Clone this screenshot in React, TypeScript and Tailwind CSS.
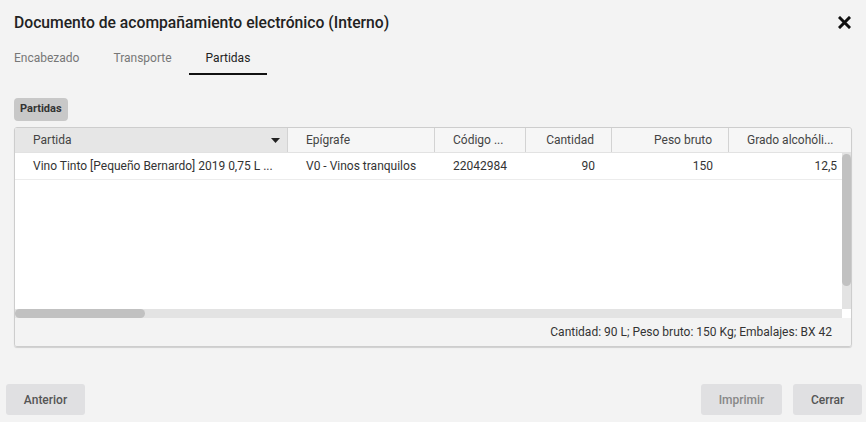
import React from 'react';

const cols = 'grid grid-cols-[273px_147px_91px_86px_117px_1fr]';

const App: React.FC = () => {
  return (
    <div className="w-[866px] h-[422px] bg-[#f3f3f3] flex flex-col font-['Roboto',sans-serif] text-[#333]">
      {/* Header */}
      <div className="h-[44px] flex items-center justify-between pl-[14px] pr-[15px] pt-[1px]">
        <h1 className="text-[15.7px] font-medium text-[#222]">Documento de acompañamiento electrónico (Interno)</h1>
        <svg width="13" height="13" viewBox="0 0 13 13">
          <path d="M2 2 L11 11 M11 2 L2 11" stroke="#111" strokeWidth="3" strokeLinecap="square" />
        </svg>
      </div>

      {/* Tabs */}
      <div className="flex h-[31px] ml-[-3px] text-[12px]">
        <div className="px-[17px] pb-[4px] flex items-center text-[#777]">Encabezado</div>
        <div className="px-[17px] pb-[4px] flex items-center text-[#777]">Transporte</div>
        <div className="px-[17px] pb-[2px] flex items-center text-[#222] border-b-2 border-[#111]">Partidas</div>
      </div>

      <div className="px-[14px] pt-[23px] flex flex-col">
        <div className="flex">
          <span className="flex items-center h-[23px] px-[6px] rounded-[4px] bg-[#c8c8c8] text-[11px] font-bold text-[#333]">
            Partidas
          </span>
        </div>

        {/* Table */}
        <div className="mt-[6px] h-[220px] border border-[#cdcdcd] rounded-[3px] shadow-[0_1px_1px_rgba(0,0,0,0.15)] flex flex-col text-[12px] overflow-hidden">
          <div className={`${cols} h-[25px] bg-[#f6f6f6] border-b border-[#e2e2e2] text-[#444]`}>
            <div className="flex items-center justify-between pl-[18px] pr-[7px] bg-[#e6e6e6] border-r border-[#d3d3d3]">
              <span>Partida</span>
              <svg width="9" height="5" viewBox="0 0 9 5"><path d="M0 0 H9 L4.5 5 Z" fill="#222" /></svg>
            </div>
            <div className="flex items-center pl-[18px] border-r border-[#d3d3d3]">Epígrafe</div>
            <div className="flex items-center pl-[18px] border-r border-[#d3d3d3]">Código ...</div>
            <div className="flex items-center justify-end pr-[17px] border-r border-[#d3d3d3]">Cantidad</div>
            <div className="flex items-center justify-end pr-[16px] border-r border-[#d3d3d3]">Peso bruto</div>
            <div className="flex items-center pl-[18px] pr-[17px] whitespace-nowrap overflow-hidden">Grado alcohóli...</div>
          </div>

          <div className="flex h-[156px] bg-white">
            <div className="flex-1">
              <div className={`${cols} h-[27px] border-b border-[#ececec] text-[#333]`}>
                <div className="flex items-center pl-[18px]">Vino Tinto [Pequeño Bernardo] 2019 0,75 L ...</div>
                <div className="flex items-center pl-[18px]">V0 - Vinos tranquilos</div>
                <div className="flex items-center pl-[18px]">22042984</div>
                <div className="flex items-center justify-end pr-[17px]">90</div>
                <div className="flex items-center justify-end pr-[16px]">150</div>
                <div className="flex items-center justify-end pr-[5px]">12,5</div>
              </div>
            </div>
            <div className="w-[9px] bg-[#e3e3e3] pt-[1px]">
              <div className="h-[132px] bg-[#c1c1c1] rounded-[5px]" />
            </div>
          </div>

          <div className="flex h-[9px]">
            <div className="flex-1 bg-[#e3e3e3]">
              <div className="w-[130px] h-full bg-[#c1c1c1] rounded-[5px]" />
            </div>
            <div className="w-[9px] bg-white" />
          </div>

          <div className="flex-1 flex items-center justify-end pr-[19px] bg-[#f3f3f3] text-[#333]">
            Cantidad: 90 L; Peso bruto: 150 Kg; Embalajes: BX 42
          </div>
        </div>
      </div>

      {/* Footer buttons */}
      <div className="mt-auto mb-[7px] flex items-center justify-between pl-[6px] pr-[4px] text-[12px] font-medium">
        <button className="h-[31px] w-[79px] rounded-[3px] bg-[#e0e0e2] text-[#555]">Anterior</button>
        <div className="flex gap-[11px]">
          <button className="h-[31px] w-[81px] rounded-[3px] bg-[#e0e0e2] text-[#888]">Imprimir</button>
          <button className="h-[31px] w-[69px] rounded-[3px] bg-[#e0e0e2] text-[#555]">Cerrar</button>
        </div>
      </div>
    </div>
  );
};

export default App;
